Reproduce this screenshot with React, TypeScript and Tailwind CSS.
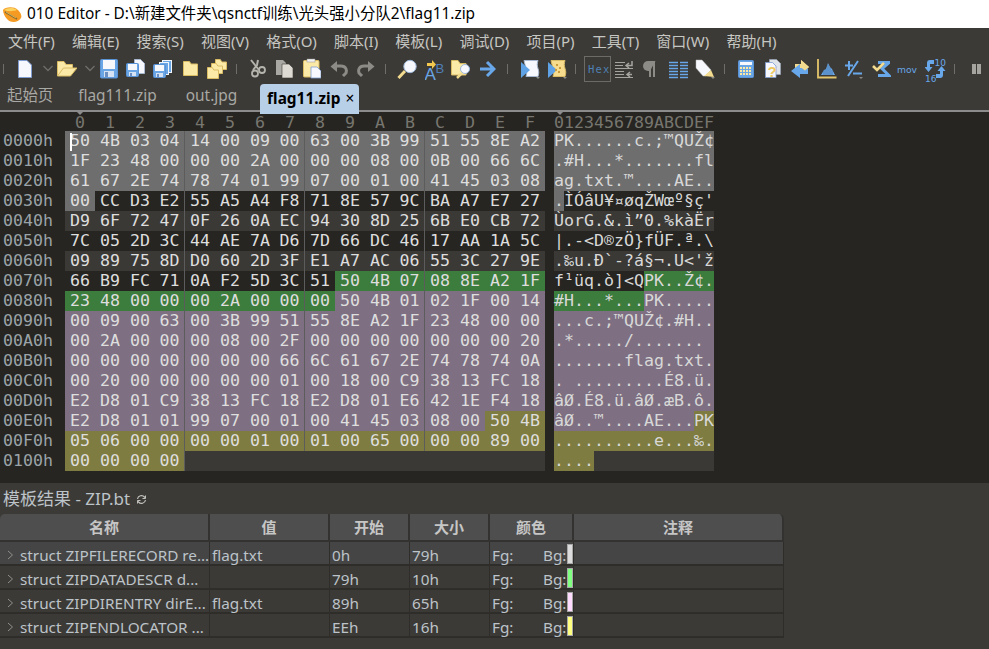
import type { ReactNode } from "react";

const HEX = [
  "50 4B 03 04 14 00 09 00 63 00 3B 99 51 55 8E A2",
  "1F 23 48 00 00 00 2A 00 00 00 08 00 0B 00 66 6C",
  "61 67 2E 74 78 74 01 99 07 00 01 00 41 45 03 08",
  "00 CC D3 E2 55 A5 A4 F8 71 8E 57 9C BA A7 E7 27",
  "D9 6F 72 47 0F 26 0A EC 94 30 8D 25 6B E0 CB 72",
  "7C 05 2D 3C 44 AE 7A D6 7D 66 DC 46 17 AA 1A 5C",
  "09 89 75 8D D0 60 2D 3F E1 A7 AC 06 55 3C 27 9E",
  "66 B9 FC 71 0A F2 5D 3C 51 50 4B 07 08 8E A2 1F",
  "23 48 00 00 00 2A 00 00 00 50 4B 01 02 1F 00 14",
  "00 09 00 63 00 3B 99 51 55 8E A2 1F 23 48 00 00",
  "00 2A 00 00 00 08 00 2F 00 00 00 00 00 00 00 20",
  "00 00 00 00 00 00 00 66 6C 61 67 2E 74 78 74 0A",
  "00 20 00 00 00 00 00 01 00 18 00 C9 38 13 FC 18",
  "E2 D8 01 C9 38 13 FC 18 E2 D8 01 E6 42 1E F4 18",
  "E2 D8 01 01 99 07 00 01 00 41 45 03 08 00 50 4B",
  "05 06 00 00 00 00 01 00 01 00 65 00 00 00 89 00",
  "00 00 00 00",
].map((r) => r.split(" "));

const ADDR = ["0000h", "0010h", "0020h", "0030h", "0040h", "0050h", "0060h", "0070h", "0080h", "0090h", "00A0h", "00B0h", "00C0h", "00D0h", "00E0h", "00F0h", "0100h"];
const COLS = "0123456789ABCDEF".split("");
const MENU = ["文件(F)", "编辑(E)", "搜索(S)", "视图(V)", "格式(O)", "脚本(I)", "模板(L)", "调试(D)", "项目(P)", "工具(T)", "窗口(W)", "帮助(H)"];

const decoder = new TextDecoder("windows-1252");

function toChar(h: string) {
  const b = parseInt(h, 16);
  if (b < 0x20 || b === 0x7f || [0x81, 0x8d, 0x8f, 0x90, 0x9d].includes(b)) return ".";
  return decoder.decode(new Uint8Array([b]));
}

// background of a byte, by which template struct it belongs to
function byteBg(offset: number, row: number) {
  if (offset < 0x31) return "bg-[#6e6e6e]";
  if (offset < 0x79) return row % 2 === 0 ? "bg-[#3b3936]" : "bg-[#262521]";
  if (offset < 0x89) return "bg-[#3c7c3c]";
  if (offset < 0xee) return "bg-[#7e7082]";
  return "bg-[#7e7c40]";
}

function Ico({ x, w, className, children }: { x: number; w: number; className?: string; children: ReactNode }) {
  return (
    <svg width={w} height={28} viewBox={`${x} 55 ${w} 28`} className={`shrink-0 ${className ?? ""}`}>
      {children}
    </svg>
  );
}

function Sep({ x, className }: { x: number; className: string }) {
  return (
    <Ico x={x} w={1} className={className}>
      <rect x={x} y={64} width={1} height={10} fill="#6f6e69" />
    </Ico>
  );
}

function Drop({ x, y }: { x: number; y: number }) {
  return <path d={`M${x} ${y}h4l-2 2z`} fill="#8b8a85" />;
}

function Chevron({ x }: { x: number }) {
  return <path d={`M${x + 0.5} 66l4.5 4.5 4.5-4.5`} fill="none" stroke="#6f6e6a" strokeWidth="1.3" />;
}

function Floppy({ x, y, s = 1 }: { x: number; y: number; s?: number }) {
  return (
    <g transform={`translate(${x} ${y}) scale(${s})`}>
      <rect x=".5" y=".5" width="12" height="13" rx="1" fill="#6aa5e6" stroke="#5a93d6" />
      <rect x="2" y="1" width="9" height="6" fill="#f6f8fc" />
      <rect x="3" y="9" width="7" height="4" fill="#d5e3f5" />
      <rect x="4" y="10" width="2" height="3" fill="#6a8fc0" />
    </g>
  );
}

function Folder({ x, y, w, h }: { x: number; y: number; w: number; h: number }) {
  return (
    <path
      d={`M${x + 0.5} ${y + h - 0.5}V${y + 0.5}h${w * 0.4}l1.5 2.5H${x + w - 0.5}V${y + h - 0.5}z`}
      fill="#fbe9a8"
      stroke="#d9bb64"
    />
  );
}

function Scroll({ x, fill, stroke }: { x: number; fill: string; stroke: string }) {
  return (
    <>
      <path d={`M${x + 3} 60.5h14c-1 3-1 5 0 8s1 5 0 8H${x + 5}c1-3 1-5 0-8s-1-5-2-8z`} fill={fill} stroke={stroke} />
      <path d={`M${x} 62l9 8-9 8z`} fill="#5fa2e6" />
      <Drop x={x + 15} y={77} />
    </>
  );
}

function Toolbar() {
  return (
    <div className="flex h-[28px] items-center bg-[#3c3a36]">
      <Sep x={3} className="ml-[3px]" />
      <Ico x={18} w={14} className="ml-[14px]">
        <path d="M18.5 60.5H27l4.5 4.5v12.5h-13z" fill="#f6f8fd" stroke="#7e9cd0" />
      </Ico>
      <Ico x={43} w={10} className="ml-[11px]">
        <Chevron x={43} />
      </Ico>
      <Ico x={57} w={20} className="ml-[4px]">
        <path d="M57.5 76V61.5H64l2 3h6.5V68" fill="#fbe9a8" stroke="#d9bb64" />
        <path d="M57.5 76l6-8H77l-6.500 8z" fill="#fbe9a8" stroke="#d9bb64" />
      </Ico>
      <Ico x={85} w={10} className="ml-[8px]">
        <Chevron x={85} />
      </Ico>
      <Ico x={100} w={18} className="ml-[5px]">
        <rect x="100.5" y="59.500" width="17" height="18.500" rx="1" fill="#6aa5e6" stroke="#5a93d6" />
        <rect x="103" y="60" width="12" height="9" fill="#f7f8fc" />
        <rect x="104" y="71" width="10" height="6" fill="#d5e3f5" />
        <rect x="105" y="72" width="3" height="5" fill="#6a8fc0" />
      </Ico>
      <Ico x={126} w={20} className="ml-[8px]">
        <path d="M134.500 59.500h6l4 4v10h-10z" fill="#f6f8fd" stroke="#a8b8d0" />
        <Floppy x={126} y={63} />
      </Ico>
      <Ico x={153} w={20} className="ml-[7px]">
        <rect x="162.500" y="60.500" width="9" height="12" fill="#6aa5e6" stroke="#f0f4fb" />
        <rect x="159.500" y="62.500" width="9" height="12" fill="#6aa5e6" stroke="#f0f4fb" />
        <Floppy x={153} y={64} />
      </Ico>
      <Ico x={183} w={16} className="ml-[10px]">
        <Folder x={183} y={61} w={15} h={15} />
      </Ico>
      <Ico x={207} w={21} className="ml-[8px]">
        <Folder x={215} y={59} w={12} h={11} />
        <Folder x={211} y={63} w={12} h={11} />
        <Folder x={207} y={67} w={12} h={12} />
      </Ico>
      <Sep x={236} className="ml-[8px]" />
      <Ico x={250} w={16} className="ml-[13px]">
        <path d="M251 60l8 10M258 60l-1 5-4 5" fill="none" stroke="#b5b4ad" strokeWidth="2" />
        <circle cx="255" cy="73.500" r="3" fill="none" stroke="#b5b4ad" strokeWidth="1.800" />
        <circle cx="262" cy="70" r="3" fill="none" stroke="#b5b4ad" strokeWidth="1.800" />
      </Ico>
      <Ico x={276} w={18} className="ml-[10px]">
        <path d="M276 60h7l3 3v12h-10z" fill="#a9a8a2" />
        <path d="M282 64h7l4 4v10h-11z" fill="#dddbd3" stroke="#3c3a36" strokeWidth=".6" />
      </Ico>
      <Ico x={303} w={18} className="ml-[9px]">
        <rect x="303.500" y="60.500" width="15.500" height="16.500" rx="1" fill="#fbe9a8" stroke="#d9bb64" />
        <rect x="307" y="59" width="8" height="3" fill="#f4f4f4" stroke="#8f8f8f" strokeWidth=".5" />
        <path d="M311 67h6l4 4v7h-10z" fill="#f6f8fd" stroke="#7e9cd0" strokeWidth=".8" />
      </Ico>
      <Ico x={330} w={18} className="ml-[9px]">
        <path d="M335 66h6c5 0 6 4 5 7l-3 3" fill="none" stroke="#8c8b85" strokeWidth="3" />
        <path d="M337 61v11l-6.500-5.500z" fill="#8c8b85" />
      </Ico>
      <Ico x={357} w={18} className="ml-[9px]">
        <path d="M370 66h-6c-5 0-6 4-5 7l3 3" fill="none" stroke="#8c8b85" strokeWidth="3" />
        <path d="M368 61v11l6.500-5.500z" fill="#8c8b85" />
      </Ico>
      <Sep x={385} className="ml-[10px]" />
      <Ico x={397} w={21} className="ml-[11px]">
        <path d="M405 71l-6.500 7" stroke="#f2da8e" strokeWidth="3" fill="none" />
        <circle cx="410" cy="66.500" r="6.200" fill="#f6f8fd" stroke="#9db6d8" />
      </Ico>
      <Ico x={425} w={21} className="ml-[7px]">
        <path d="M427 63h5v-3l4 4.500-4 4.500v-3h-5z" fill="#f2c84e" />
        <text x="424.500" y="80" fontSize="17" fontFamily="Liberation Sans" fill="#6aa5e6">A</text>
        <text x="435.500" y="73" fontSize="13" fontFamily="Liberation Sans" fill="#4f7fb8">B</text>
      </Ico>
      <Ico x={451} w={20} className="ml-[5px]">
        <path d="M451.500 75V60.500H458l2 3h6V75z" fill="#fbe9a8" stroke="#d9bb64" />
        <path d="M462 73l-5 5" stroke="#f2da8e" strokeWidth="2.500" />
        <circle cx="465" cy="69" r="4.500" fill="#f6f8fd" stroke="#9db6d8" />
      </Ico>
      <Ico x={479} w={17} className="ml-[8px]">
        <path d="M480 69h12M487 62l7 7-7 7" fill="none" stroke="#68a8ea" strokeWidth="3" />
      </Ico>
      <Sep x={507} className="ml-[11px]" />
      <Ico x={521} w={20} className="ml-[13px]">
        <Scroll x={521} fill="#f6f8fd" stroke="#a8b8d0" />
      </Ico>
      <Ico x={548} w={20} className="ml-[7px]">
        <Scroll x={548} fill="#f6dc8c" stroke="#d9bb64" />
        <path d="M556 64h2v2h-2zM559 67h2v2h-2zM555 69h2v2h-2zM558 71h2v2h-2z" fill="#c89c3c" />
      </Ico>
      <Sep x={575} className="ml-[7px]" />
      <Ico x={584} w={27} className="ml-[8px]">
        <rect x="584.500" y="56.500" width="26" height="25" fill="#3a3935" stroke="#6c6b66" />
        <text x="588" y="73" fontSize="10.500" letterSpacing="1.200" fontFamily="DejaVu Sans Mono" fill="#4f80b4">Hex</text>
      </Ico>
      <Ico x={614} w={20} className="ml-[3px]">
        <path d="M615 62.500h10M615 65.500h8M615 68.500h18M615 71.500h9M615 74.500h9M615 77.500h18" stroke="#a5a49e" strokeWidth="1.200" />
        <path d="M627 65.500h5V61M632 74.500h-5M630 72l-3 2.500 3 2.500M629 63l-3 2.500 3 2.500" fill="none" stroke="#a5a49e" strokeWidth="1.500" />
      </Ico>
      <Ico x={643} w={14} className="ml-[9px]">
        <path d="M654 61v16M650 61v16" stroke="#8c8b85" strokeWidth="2" />
        <path d="M655.500 61H648a5 5 0 0 0 0 10h2z" fill="#8c8b85" />
      </Ico>
      <Ico x={669} w={20} className="ml-[12px]">
        <path d="M669 62.500h9M680 62.500h8M669 65.500h9M680 65.500h8M669 68.500h9M680 68.500h8M669 71.500h9M680 71.500h8M669 74.500h9M680 74.500h8M669 77.500h9M680 77.500h8" stroke="#68a8ea" strokeWidth="1.600" />
      </Ico>
      <Ico x={695} w={20} className="ml-[6px]">
        <path d="M696 60h6l9 10-5 6h-3l-7-8z" fill="#f6f8fd" stroke="#b8b8b8" strokeWidth=".5" />
        <path d="M704 76l7-6 3 7z" fill="#f2da8e" />
        <Drop x={711} y={77} />
      </Ico>
      <Sep x={724} className="ml-[9px]" />
      <Ico x={738} w={16} className="ml-[13px]">
        <rect x="738.500" y="60.500" width="15" height="17" rx="1" fill="#6aa5e6" stroke="#5a93d6" />
        <rect x="740" y="62" width="12" height="3" fill="#f6f8fd" />
        <path d="M740 67h2v2h-2zM743 67h2v2h-2zM746 67h2v2h-2zM749 67h2v2h-2zM740 70h2v2h-2zM743 70h2v2h-2zM746 70h2v2h-2zM749 70h2v2h-2zM740 73h2v2h-2zM743 73h2v2h-2zM746 73h2v2h-2zM749 73h2v2h-2z" fill="#fbe9a8" />
      </Ico>
      <Ico x={765} w={17} className="ml-[11px]">
        <path d="M769.500 59.500h7l4 4v11h-11z" fill="#dfe3ea" stroke="#9aa6b8" strokeWidth=".7" />
        <path d="M765.500 62.500h7l3.500 3.500v11.500h-10.500z" fill="#f6f8fd" stroke="#7e9cd0" strokeWidth=".8" />
        <text x="767.500" y="77" fontSize="15" fontWeight="bold" fontFamily="Liberation Sans" fill="#eec95e">?</text>
      </Ico>
      <Ico x={791} w={19} className="ml-[9px]">
        <path d="M795 64h6v-4l8 7-8 7v-4h-6z" fill="#f2da8e" />
        <path d="M800 68v-4l-9 7 9 7v-4h8v-5l-1-1z" fill="#68a8ea" />
        <path d="M801 60l8 7-4 3.500-4-3z" fill="#f2da8e" />
      </Ico>
      <Ico x={817} w={20} className="ml-[7px]">
        <path d="M818 59v18.500h18.500" fill="none" stroke="#e3c56c" strokeWidth="1.800" />
        <path d="M821 75l3-5 2-1 2-6 2 4 2 2 3 6z" fill="#68a8ea" />
        <path d="M824 70v5M826 69v6M828 65v10M830 67v8M832 70v5" stroke="#3c5e84" strokeWidth=".6" />
      </Ico>
      <Ico x={845} w={18} className="ml-[8px]">
        <path d="M845 65.500h8M849 61v9M858 61l-10 15M853 73.500h9" fill="none" stroke="#68a8ea" strokeWidth="2" />
        <Drop x={859} y={77} />
      </Ico>
      <Ico x={872} w={19} className="ml-[9px]">
        <path d="M878 62.500h12M889 62.500l-7 6 7 7h-11" fill="none" stroke="#68a8ea" strokeWidth="3" />
        <path d="M873 66l4 4 7-7" fill="none" stroke="#f2da8e" strokeWidth="2.600" />
      </Ico>
      <Ico x={897} w={21} className="ml-[6px]">
        <text x="897" y="73" fontSize="9.200" fontFamily="DejaVu Sans" fill="#68a8ea">mov</text>
      </Ico>
      <Ico x={925} w={21} className="ml-[7px]">
        <path d="M934 60h-4c-2 0-3 1-3 3v4h-2.500l4 5 4-5H930v-3h4z" fill="#68a8ea" />
        <path d="M936 78h4c2 0 3-1 3-3v-4h2.500l-4-5-4 5h2.500v3h-4z" fill="#68a8ea" />
        <text x="934.500" y="66" fontSize="9" fontFamily="DejaVu Sans" fill="#68a8ea">10</text>
        <text x="925" y="82" fontSize="9" fontFamily="DejaVu Sans" fill="#68a8ea">16</text>
      </Ico>
      <Sep x={954} className="ml-[8px]" />
      <Ico x={972} w={10} className="ml-[17px]">
        <rect x="972" y="64" width="4" height="10" fill="#a5a49e" />
        <rect x="977" y="64" width="4" height="10" fill="#a5a49e" />
      </Ico>
    </div>
  );
}

function HexView() {
  return (
    <div className="h-[371px] bg-[#262521] font-['DejaVu_Sans_Mono',monospace] text-[16.6px] leading-[20px] whitespace-pre">
      <div className="flex h-[19px] text-[#77766f] leading-[22px]">
        <div className="w-[65px]" />
        <div className="relative flex w-[480px]">
          <div className="absolute top-0 left-[12px] h-0 w-0 border-x-[3px] border-t-[3px] border-x-transparent border-t-[#8c8c8c]" />
          {COLS.map((c) => (
            <span key={c} className="w-[30px] text-center">{c}</span>
          ))}
        </div>
        <div className="relative ml-[9px] flex w-[160px]">
          <div className="absolute top-0 left-[3px] h-0 w-0 border-x-[3px] border-t-[3px] border-x-transparent border-t-[#8c8c8c]" />
          {COLS.map((c) => (
            <span key={c} className="w-[10px] text-center">{c}</span>
          ))}
        </div>
      </div>
      {HEX.map((row, r) => (
        <div key={r} className="flex h-[20px]">
          <div className="w-[65px] pl-[3px] text-[#9aa3a8]">{ADDR[r]}</div>
          <div className={`relative flex w-[480px] ${r % 2 === 0 ? "bg-[#3b3936]" : "bg-[#262521]"}`}>
            {r === 0 && <div className="absolute top-[2px] left-[5px] h-[18px] w-[2px] bg-white" />}
            {row.map((h, i) => (
              <span
                key={i}
                className={`w-[30px] text-center text-[#dedede] ${byteBg(r * 16 + i, r)} ${i % 4 === 3 && i < 15 ? "border-r border-[#5c5c5c]" : ""}`}
              >
                {h}
              </span>
            ))}
          </div>
          <div className={`ml-[9px] flex w-[160px] ${r % 2 === 0 ? "bg-[#3b3936]" : "bg-[#262521]"}`}>
            {row.map((h, i) => (
              <span key={i} className={`w-[10px] text-center text-[#d8d8d8] ${byteBg(r * 16 + i, r)}`}>
                {toChar(h)}
              </span>
            ))}
          </div>
        </div>
      ))}
    </div>
  );
}

const HEADERS = [
  { label: "名称", cls: "w-[210px] rounded-tl-[5px]" },
  { label: "值", cls: "w-[120px]" },
  { label: "开始", cls: "w-[80px]" },
  { label: "大小", cls: "w-[80px]" },
  { label: "颜色", cls: "w-[84px]" },
  { label: "注释", cls: "w-[210px] rounded-tr-[5px] border-r-0" },
];

const ROWS = [
  { name: "struct ZIPFILERECORD re...", value: "flag.txt", start: "0h", size: "79h", bg: "bg-[#dcdcdc]" },
  { name: "struct ZIPDATADESCR d...", value: "", start: "79h", size: "10h", bg: "bg-[#80ff80]" },
  { name: "struct ZIPDIRENTRY dirE...", value: "flag.txt", start: "89h", size: "65h", bg: "bg-[#ffdcff]" },
  { name: "struct ZIPENDLOCATOR ...", value: "", start: "EEh", size: "16h", bg: "bg-[#ffff80]" },
];

function TemplateResults() {
  return (
    <div className="flex-1 bg-[#3c3a36] font-['Noto_Sans','Noto_Sans_CJK_SC',sans-serif] text-[15.3px] text-[#bcc3c9]">
      <div className="flex h-[31px] items-center pl-[3px] text-[17px]">
        <span>模板结果 - ZIP.bt</span>
        <svg width="11" height="11" viewBox="0 0 11 11" className="mt-[2px] ml-[6px]" fill="none" stroke="#c0c0bc" strokeWidth="1.200">
          <path d="M1.500 5a4 4 0 0 1 7-2l1 1M9.500 6a4 4 0 0 1-7 2l-1-1" />
          <path d="M9.500 1.500v3h-3M1.500 9.500v-3h3" strokeWidth="1" />
        </svg>
      </div>
      <div className="w-[784px]">
        <div className="flex h-[28px]">
          {HEADERS.map((h) => (
            <div
              key={h.label}
              className={`flex items-center justify-center border-r-2 border-b-2 border-[#333230] bg-[#4e4e4e] pt-[1px] text-[15px] font-bold text-[#c6c6c6] ${h.cls}`}
            >
              {h.label}
            </div>
          ))}
        </div>
        {ROWS.map((row, i) => (
          <div key={row.name} className={`flex h-[24px] border-b-2 border-[#2e2d2a] leading-[27px] ${i === 0 ? "bg-[#454545]" : ""}`}>
            <div className="flex w-[210px] items-start border-r border-[#2e2d2a] whitespace-nowrap">
              <svg width="7" height="10" viewBox="0 0 7 10" className="mt-[8px] mr-[6px] ml-[7px] shrink-0" fill="none" stroke="#8f8f8b">
                <path d="M1 1l4.500 4L1 9" />
              </svg>
              {row.name}
            </div>
            <div className="w-[120px] border-r border-[#2e2d2a] pl-[2px]">{row.value}</div>
            <div className="w-[80px] border-r border-[#2e2d2a] pl-[2px]">{row.start}</div>
            <div className="w-[80px] border-r border-[#2e2d2a] pl-[2px]">{row.size}</div>
            <div className="flex w-[84px] items-start border-r border-[#2e2d2a] pl-[2px]">
              <span className="w-[51px]">Fg:</span>
              <span className="w-[24px]">Bg:</span>
              <span className={`mt-[2px] h-[20px] w-[6px] border border-[#a8a8a8] ${row.bg}`} />
            </div>
            <div className="w-[210px] border-r border-[#2e2d2a]" />
          </div>
        ))}
      </div>
    </div>
  );
}

export default function App() {
  return (
    <div className="flex h-[649px] w-[989px] flex-col overflow-hidden bg-[#262521] font-['Noto_Sans','Noto_Sans_CJK_SC',sans-serif]">
      <div className="flex h-[28px] items-center bg-white text-[15.4px] text-black">
        <svg width="20" height="16" viewBox="0 0 20 16" className="mt-[1px] ml-[2px] shrink-0">
          <path d="M1 3C3 0 12-1 16 3c3 3 4 6 3 8-3 5-11 5-14 1C3 10 1 6 1 3z" fill="#f59a23" />
          <path d="M2 3c3-2 9-3 13 0-3 1-8 2-13 0z" fill="#fbd25e" />
          <path d="M3 5l12 7" stroke="#8a6a30" strokeWidth="1.500" />
          <path d="M4 5l10 6" stroke="#f6e27a" strokeWidth=".6" />
        </svg>
        <span className="ml-[5px]">010 Editor - D:\新建文件夹\qsnctf训练\光头强小分队2\flag11.zip</span>
      </div>
      <div className="flex h-[27px] items-center gap-[17.2px] bg-[#3c3a36] pl-[8px] text-[15px] text-[#c6c6c2]">
        {MENU.map((m) => (
          <span key={m}>{m}</span>
        ))}
      </div>
      <Toolbar />
      <div className="relative flex h-[29px] items-end border-b-2 border-[#8c8c8c] bg-[#3c3a36] text-[15.4px] text-[#a8a8a4]">
        <div className="flex h-[28px] items-center">
          <span className="ml-[7px]">起始页</span>
          <span className="ml-[25px]">flag111.zip</span>
          <span className="ml-[29px]">out.jpg</span>
        </div>
        <div className="absolute top-[1px] left-[260px] flex h-[30px] w-[99px] items-center rounded-t-[4px] bg-[#b8cfe8] pl-[7px] font-bold text-black">
          flag11.zip
          <span className="ml-[5px] font-normal">×</span>
        </div>
      </div>
      <HexView />
      <TemplateResults />
    </div>
  );
}
